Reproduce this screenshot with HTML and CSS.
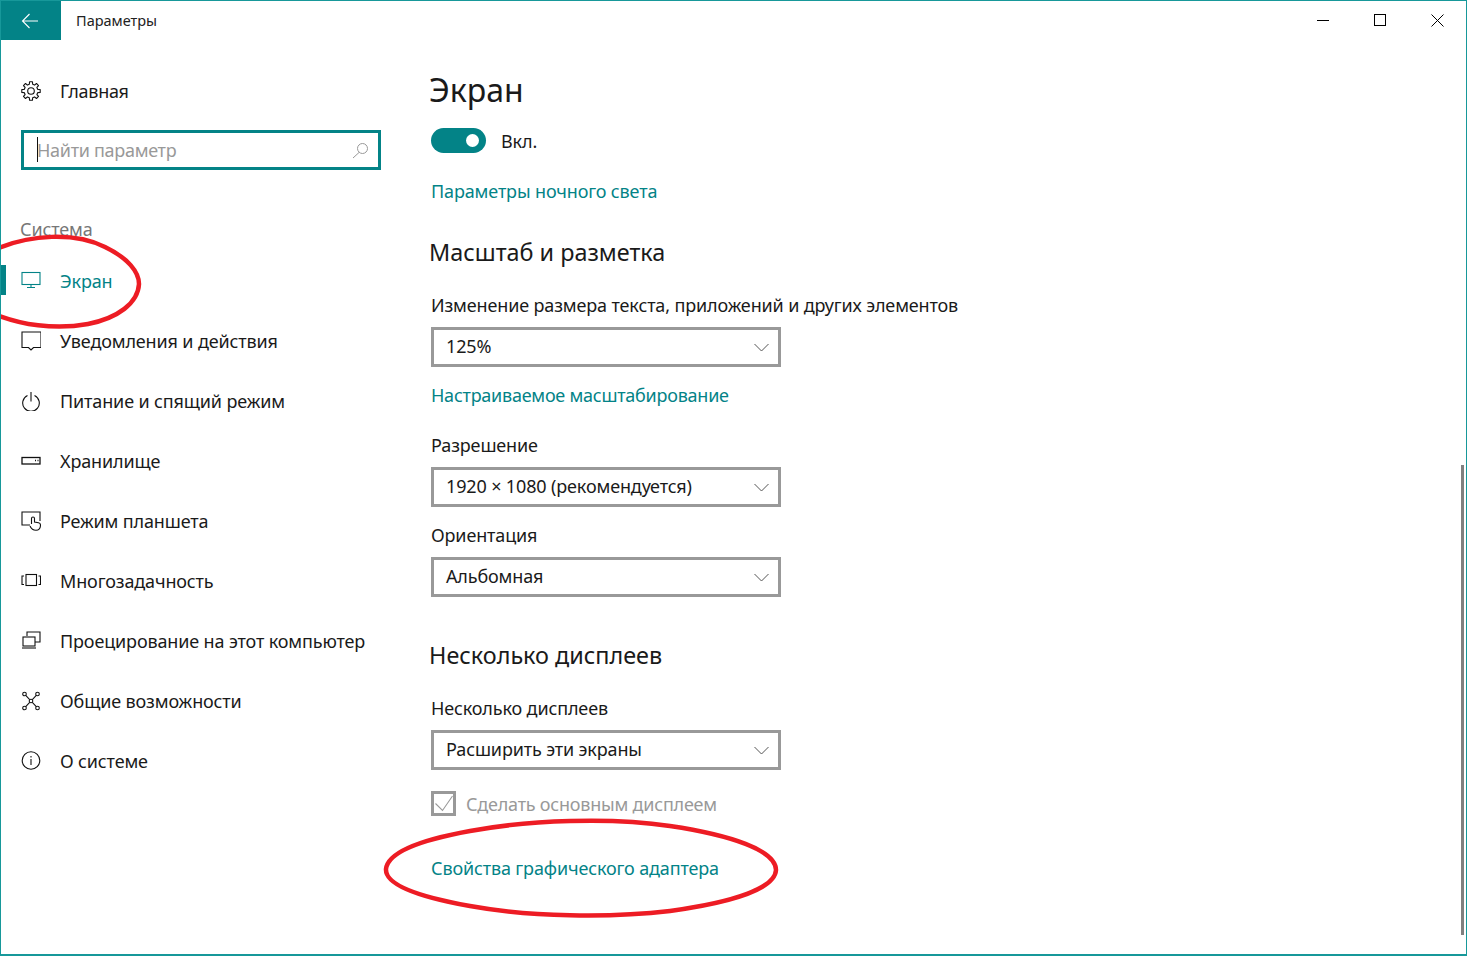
FILE: index.html
```html
<!DOCTYPE html>
<html lang="ru">
<head>
<meta charset="utf-8">
<title>Параметры</title>
<link rel="stylesheet" href="styles.css">
</head>
<body>
<div class="window">
  <header class="titlebar">
    <div class="back">
      <svg width="18" height="16" viewBox="0 0 18 16" fill="none" stroke="#fff" stroke-width="1.1"><path d="M17 8H1.5M8.5 1 1.5 8l7 7"/></svg>
    </div>
    <div class="apptitle">Параметры</div>
    <div class="winbtns">
      <svg width="13" height="13" viewBox="0 0 13 13" stroke="#000" fill="none"><path d="M0 6.5h12"/></svg>
      <svg width="13" height="13" viewBox="0 0 13 13" stroke="#000" fill="none"><rect x=".5" y=".5" width="11" height="11"/></svg>
      <svg width="13" height="13" viewBox="0 0 13 13" stroke="#000" fill="none"><path d="M.5.5l12 12M12.500.5l-12 12"/></svg>
    </div>
  </header>
  <div class="body">
    <aside class="sidebar">
      <div class="home">
        <svg class="icon" viewBox="0 0 20 20" fill="none" stroke="#111" stroke-width="1.1" stroke-linejoin="round"><circle cx="10" cy="10" r="3.300"/><polygon points="8.33,3.31 8.55,.81 11.45,.81 11.67,3.31 13.55,4.09 15.47,2.48 17.52,4.53 15.91,6.45 16.69,8.33 19.19,8.55 19.19,11.45 16.69,11.67 15.91,13.55 17.52,15.47 15.47,17.52 13.55,15.91 11.67,16.69 11.45,19.19 8.55,19.19 8.33,16.69 6.45,15.91 4.53,17.52 2.48,15.47 4.09,13.55 3.31,11.67 .81,11.45 .81,8.55 3.31,8.33 4.09,6.45 2.48,4.53 4.53,2.48 6.45,4.09"/></svg>
        <span>Главная</span>
      </div>
      <div class="search">
        <i class="caret"></i>
        <span class="placeholder">Найти параметр</span>
        <svg class="searchicon" width="17" height="17" viewBox="0 0 17 17" fill="none" stroke="#999" stroke-width="1"><circle cx="10.500" cy="6.500" r="5"/><path d="M7 10.500 1 16"/></svg>
      </div>
      <div class="section">Система</div>
      <nav class="nav">
        <div class="nav-item active">
          <svg class="icon" viewBox="0 0 20 20" fill="none" stroke="#038387" stroke-width="1.100"><rect x="1" y="1.500" width="18" height="12"/><path d="M10 13.500v3M6 16.500h8"/></svg>
          <span>Экран</span>
        </div>
        <div class="nav-item">
          <svg class="icon" viewBox="0 0 20 20" fill="none" stroke="#111" stroke-width="1.100"><path d="M1 1h19v15.500h-7.500L10 19l-2.500-2.500H1z"/></svg>
          <span>Уведомления и действия</span>
        </div>
        <div class="nav-item">
          <svg class="icon" viewBox="0 0 20 20" fill="none" stroke="#111" stroke-width="1.100"><path d="M10 1v9.500M6.500 4.500a8.300 8.300 0 1 0 7 0"/></svg>
          <span>Питание и спящий режим</span>
        </div>
        <div class="nav-item">
          <svg class="icon" viewBox="0 0 20 20" fill="none" stroke="#111" stroke-width="1.300"><rect x="1" y="6.500" width="18" height="6.500"/><path d="M14 9.500h1M16.500 9.500h1"/></svg>
          <span>Хранилище</span>
        </div>
        <div class="nav-item">
          <svg class="icon" viewBox="0 0 20 20" fill="none" stroke="#111" stroke-width="1.100"><path d="M9 14H1V1h18v9"/><path d="M10.500 13V7.500a1.500 1.500 0 0 1 3 0V11l4 .8c1.300.3 2 1 2 2.200 0 3-1.500 5.300-4.500 5.300-3.500 0-5-2-6-4.300"/></svg>
          <span>Режим планшета</span>
        </div>
        <div class="nav-item">
          <svg class="icon" viewBox="0 0 20 20" fill="none" stroke="#111" stroke-width="1.100"><rect x="5" y="3.500" width="10.500" height="11"/><path d="M3 5H1v8.500h2M17.500 5h2v8.500h-2"/></svg>
          <span>Многозадачность</span>
        </div>
        <div class="nav-item">
          <svg class="icon" viewBox="0 0 20 20" fill="none" stroke="#111" stroke-width="1.100"><path d="M6 5V1h13v10h-5"/><rect x="2" y="6" width="12" height="9"/><path d="M1 17h14"/></svg>
          <span>Проецирование на этот компьютер</span>
        </div>
        <div class="nav-item">
          <svg class="icon" viewBox="0 0 20 20" fill="none" stroke="#111" stroke-width="1.100"><circle cx="10" cy="10" r="1.800"/><circle cx="3.500" cy="3" r="1.800"/><circle cx="16.500" cy="3" r="1.800"/><circle cx="3.500" cy="17" r="1.800"/><circle cx="16.500" cy="17" r="1.800"/><path d="M4.700 4.300 8.700 8.700M15.300 4.300l-4 4.400M4.700 15.700l4-4.400M15.300 15.700l-4-4.400"/></svg>
          <span>Общие возможности</span>
        </div>
        <div class="nav-item">
          <svg class="icon" viewBox="0 0 20 20" fill="none" stroke="#111" stroke-width="1.100"><circle cx="10" cy="9.500" r="8.800"/><path d="M10 8v6M10 5v1.500"/></svg>
          <span>О системе</span>
        </div>
      </nav>
    </aside>
    <main class="main">
      <h1 class="title">Экран</h1>
      <div class="toggle-row">
        <span class="toggle"><i class="knob"></i></span>
        <span>Вкл.</span>
      </div>
      <a class="link link-night">Параметры ночного света</a>
      <h2 class="heading heading-scale">Масштаб и разметка</h2>
      <div class="label label-first">Изменение размера текста, приложений и других элементов</div>
      <div class="select"><span>125%</span><svg class="chev" width="15" height="9" viewBox="0 0 15 9" fill="none" stroke="#555"><path d="M.5 1 7.500 8l7-7"/></svg></div>
      <a class="link link-custom">Настраиваемое масштабирование</a>
      <div class="label label-res">Разрешение</div>
      <div class="select"><span>1920 × 1080 (рекомендуется)</span><svg class="chev" width="15" height="9" viewBox="0 0 15 9" fill="none" stroke="#555"><path d="M.5 1 7.500 8l7-7"/></svg></div>
      <div class="label label-orient">Ориентация</div>
      <div class="select"><span>Альбомная</span><svg class="chev" width="15" height="9" viewBox="0 0 15 9" fill="none" stroke="#555"><path d="M.5 1 7.500 8l7-7"/></svg></div>
      <h2 class="heading heading-multi">Несколько дисплеев</h2>
      <div class="label label-multi">Несколько дисплеев</div>
      <div class="select"><span>Расширить эти экраны</span><svg class="chev" width="15" height="9" viewBox="0 0 15 9" fill="none" stroke="#555"><path d="M.5 1 7.500 8l7-7"/></svg></div>
      <div class="check-row">
        <span class="check"><svg width="19" height="19" viewBox="0 0 19 19" fill="none" stroke="#999" stroke-width="1.100"><path d="M1.500 9.500l7 7L18.500 2"/></svg></span>
        <span>Сделать основным дисплеем</span>
      </div>
      <a class="link link-adapter">Свойства графического адаптера</a>
    </main>
  </div>
  <i class="scrollbar"></i>
  <svg class="marks" width="1467" height="956" viewBox="0 0 1467 956" fill="none" stroke="#ed1c24" stroke-width="4.500">
    <path d="M-6 250C30 234 75 232 105 247 128 258 139 272 139 284 138 303 118 318 88 324 55 330 20 325-8 313"/>
    <path d="M386 869C388 852 420 840 470 831 530 820 610 817 670 826 730 835 776 850 776 870 775 888 735 902 670 911 610 918 530 917 470 906 420 897 385 885 386 869Z"/>
  </svg>
</div>
</body>
</html>
```
FILE: styles.css
```css
* { box-sizing: border-box; }
html, body { margin: 0; height: 100%; }
body { background: #fff; color: #1a1a1a; font-family: "Noto Sans", "Open Sans", sans-serif; font-size: 18px; letter-spacing: -.14px; overflow: hidden; }
.window { position: relative; width: 1467px; height: 956px; border: 1px solid #17989a; border-bottom-width: 2px; overflow: hidden; }
.titlebar { display: flex; align-items: center; height: 39px; }
.back { display: flex; align-items: center; justify-content: center; width: 60px; height: 39px; background: #038387; padding-right: 2px; }
.apptitle { margin: -2px 0 0 15px; font-size: 14.500px; letter-spacing: 0; color: #222; }
.winbtns { display: flex; gap: 44px; margin-left: auto; margin-right: 22px; }
.body { display: flex; }
.sidebar { width: 399px; flex: none; padding: 31px 0 0 20px; }
.home { display: flex; align-items: center; gap: 19px; height: 40px; letter-spacing: -.3px; }
.icon { width: 20px; height: 20px; flex: none; }
.search { position: relative; display: flex; align-items: center; width: 360px; height: 40px; margin-top: 19px; padding-left: 13px; border: 3px solid #038387; }
.caret { position: absolute; left: 13px; top: 4px; width: 1px; height: 25px; background: #111; }
.placeholder { color: #999; letter-spacing: -.3px; }
.searchicon { margin-left: auto; margin-right: 9px; }
.section { margin: 45px 0 0 -1px; height: 36px; line-height: 28px; color: #777; }
.nav { display: flex; flex-direction: column; margin-left: -20px; }
.nav-item { position: relative; display: flex; align-items: center; gap: 19px; height: 60px; padding-left: 20px; }
.nav-item.active { color: #038387; }
.nav-item.active::before { content: ""; position: absolute; left: 0; top: 14px; width: 5px; height: 30px; background: #038387; }
.main { flex: 1; padding: 24px 0 0 31px; }
.title { margin: 0 0 0 -2px; height: 52px; font-size: 32px; font-weight: 400; letter-spacing: 0; line-height: 52px; }
.toggle-row { display: flex; align-items: center; gap: 15px; height: 25px; margin-top: 12px; }
.toggle { position: relative; display: block; width: 55px; height: 25px; border-radius: 13px; background: #038387; }
.knob { position: absolute; right: 7px; top: 6px; width: 13px; height: 13px; border-radius: 50%; background: #fff; }
.link { display: block; height: 26px; line-height: 26px; color: #038387; }
.link-night { margin-top: 25px; }
.heading { margin: 0 0 0 -2px; height: 34px; font-size: 23.400px; font-weight: 400; letter-spacing: 0; line-height: 34px; }
.heading-scale { margin-top: 31px; }
.label { height: 26px; margin-bottom: 9px; line-height: 26px; }
.label-first { margin-top: 23px; }
.select { display: flex; align-items: center; justify-content: space-between; width: 350px; height: 40px; padding: 0 9px 2px 12px; border: 3px solid #999; }
.chev { margin-top: 2px; }
.link-custom { margin-top: 15px; letter-spacing: -.25px; }
.label-res { margin-top: 24px; }
.label-orient { margin-top: 15px; }
.heading-multi { margin-top: 41px; }
.label-multi { margin-top: 23px; }
.check-row { display: flex; align-items: center; gap: 10px; height: 25px; margin-top: 21px; color: #999; letter-spacing: -.22px; }
.check { display: flex; align-items: center; justify-content: center; width: 25px; height: 25px; border: 3px solid #999; }
.check svg { overflow: visible; }
.link-adapter { margin-top: 39px; }
.scrollbar { position: absolute; right: 2px; top: 464px; width: 3px; height: 470px; background: #808080; }
.marks { position: absolute; left: -1px; top: -1px; pointer-events: none; }
```
